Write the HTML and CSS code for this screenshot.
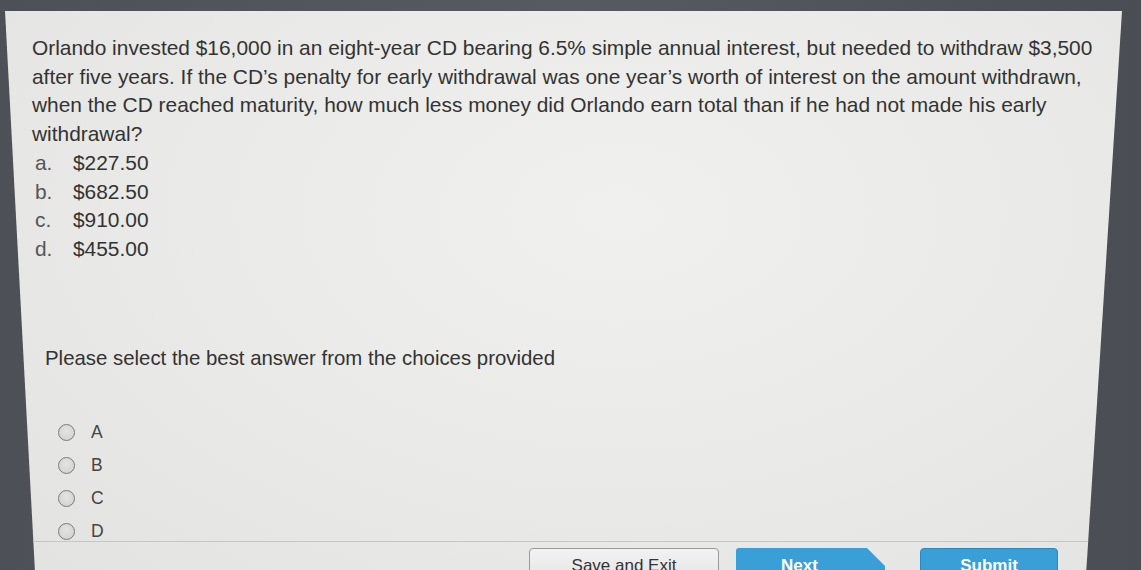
FILE: index.html
```html
<!DOCTYPE html>
<html>
<head>
<meta charset="utf-8">
<link rel="stylesheet" href="styles.css">
</head>
<body>
<div class="screen">
  <div class="content">
    <p class="question">Orlando invested $16,000 in an eight-year CD bearing 6.5% simple annual interest, but needed to withdraw $3,500 after five years. If the CD’s penalty for early withdrawal was one year’s worth of interest on the amount withdrawn, when the CD reached maturity, how much less money did Orlando earn total than if he had not made his early withdrawal?</p>
    <ol class="choices">
      <li><span class="letter">a.</span><span>$227.50</span></li>
      <li><span class="letter">b.</span><span>$682.50</span></li>
      <li><span class="letter">c.</span><span>$910.00</span></li>
      <li><span class="letter">d.</span><span>$455.00</span></li>
    </ol>
    <p class="prompt">Please select the best answer from the choices provided</p>
    <div class="radios">
      <label class="radio"><span class="dot"></span><span>A</span></label>
      <label class="radio"><span class="dot"></span><span>B</span></label>
      <label class="radio"><span class="dot"></span><span>C</span></label>
      <label class="radio"><span class="dot"></span><span>D</span></label>
    </div>
  </div>
  <div class="footer">
    <button class="btn save">Save and Exit</button>
    <button class="btn next">Next</button>
    <button class="btn submit">Submit</button>
  </div>
</div>
</body>
</html>
```
FILE: styles.css
```css
html, body {
  margin: 0;
  padding: 0;
}
body {
  width: 1141px;
  height: 570px;
  overflow: hidden;
  background: linear-gradient(90deg, #4d5056 0%, #575a60 50%, #4a4d53 100%);
  font-family: "Liberation Sans", Arial, sans-serif;
}
.screen {
  margin: 11px 0 0 5px;
  width: 1117px;
  height: 580px;
  background: radial-gradient(ellipse at 55% 35%, #f0f0ee 0%, #e9e9e7 55%, #e2e2e0 100%);
  clip-path: polygon(0 0, 1117px 0, 1080px 100%, 31px 100%);
  display: flex;
  flex-direction: column;
}
.content {
  padding: 23px 15px 0 27px;
  height: 530px;
  box-sizing: border-box;
  color: #333;
}
.question {
  margin: 0;
  font-size: 20.9px;
  line-height: 28.7px;
}
.choices {
  list-style: none;
  margin: 0;
  padding: 0 0 0 3px;
  font-size: 20.9px;
  line-height: 28.7px;
}
.choices li {
  display: flex;
}
.letter {
  width: 38px;
  color: #555;
}
.prompt {
  margin: 80px 0 0 13px;
  font-size: 20.4px;
  line-height: 28px;
}
.radios {
  margin: 51px 0 0 26px;
  display: flex;
  flex-direction: column;
  gap: 14px;
}
.radio {
  display: flex;
  align-items: center;
  gap: 16px;
  height: 19px;
  font-size: 17.5px;
  color: #454545;
}
.dot {
  width: 15px;
  height: 15px;
  border-radius: 50%;
  border: 1.5px solid #7a7a7a;
  background: radial-gradient(circle at 50% 40%, #e4e4e4 0%, #cfcfcf 100%);
}
.footer {
  border-top: 1.5px solid #c6c6c4;
  flex: 1;
  display: flex;
  align-items: flex-start;
  padding: 6px 0 0 524px;
  gap: 20px;
}
.btn {
  height: 36px;
  font-family: "Liberation Sans", Arial, sans-serif;
  font-size: 17px;
  padding: 0;
  display: flex;
  align-items: center;
  justify-content: center;
  box-sizing: border-box;
}
.save {
  width: 190px;
  background: linear-gradient(#f2f2f2, #e4e4e4);
  border: 1.5px solid #9a9a9a;
  border-radius: 4px;
  color: #333;
}
.next {
  width: 149px;
  border: none;
  color: #fff;
  font-weight: bold;
  background: #3a9fd6;
  clip-path: polygon(0 0, 131px 0, 149px 18px, 149px 100%, 0 100%);
  border-radius: 3px 0 0 0;
  padding-right: 22px;
  margin-left: -3px;
}
.submit {
  width: 138px;
  border: 1px solid #2e88be;
  color: #fff;
  font-weight: bold;
  background: #3a9fd6;
  border-radius: 4px;
  margin-left: 15px;
}
```
